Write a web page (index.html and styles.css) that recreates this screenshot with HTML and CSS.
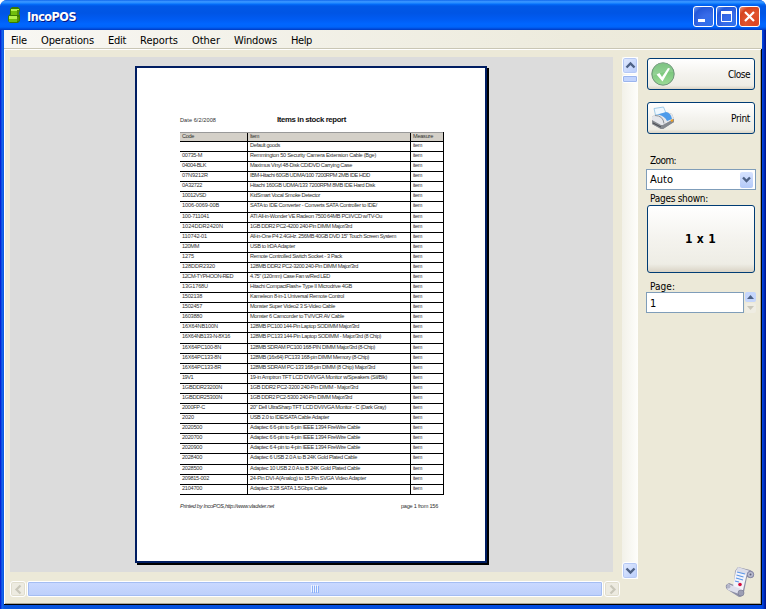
FILE: index.html
```html
<!DOCTYPE html>
<html lang="en">
<head>
<meta charset="utf-8">
<title>IncoPOS</title>
<link rel="stylesheet" href="styles.css">
</head>
<body>
<div class="window">
  <header class="titlebar">
    <svg class="app-icon" width="14" height="18" viewBox="0 0 14 18"><path d="M2 2l2-2h6l2 2v1l-1 4 1 1v6l-2 2H2l-2-2v-5l2-2z" fill="#397b00"/><path d="M3 2h8v2H3zM1 9h8v3H1z" fill="#b4f04c"/><path d="M3 4h6v4H3zM1 12h8v3H1z" fill="#70bd0c"/><path d="M9 3h2v5H9zM9 10h2v4H9z" fill="#548d05"/></svg>
    <h1><span data-w="49">IncoPOS</span></h1>
    <div class="controls">
      <button class="ctl"><svg width="19" height="19"><path d="M4 13.500h7" stroke="#fff" stroke-width="3"/></svg></button>
      <button class="ctl"><svg width="19" height="19"><path d="M4.500 5.500h10v9h-10z" fill="none" stroke="#fff"/><path d="M4 5.500h11" stroke="#fff" stroke-width="3"/></svg></button>
      <button class="ctl ctl-close"><svg width="19" height="19"><path d="M5 5l9 9M14 5l-9 9" stroke="#fff" stroke-width="2.200"/></svg></button>
    </div>
  </header>
  <nav class="menu">
    <span data-w="16">File</span><span data-w="53">Operations</span><span data-w="18">Edit</span><span data-w="38">Reports</span><span data-w="28">Other</span><span data-w="43">Windows</span><span data-w="21">Help</span>
  </nav>
  <main class="content">
    <section class="viewer">
      <div class="canvas">
        <article class="paper">
          <div class="report-head"><span class="date" data-w="36">Date 6/2/2008</span><h2><span data-w="69">Items in stock report</span></h2></div>
          <div class="report" id="report"></div>
          <div class="report-foot"><i data-w="94">Printed by IncoPOS,http://www.vladster.net</i><span data-w="37">page 1 from 156</span></div>
        </article>
      </div>
      <div class="vscroll">
        <div class="sb"><svg width="15" height="15"><path d="M3.500 9.500l4-4 4 4" fill="none" stroke="#4d6185" stroke-width="2.400"/></svg></div>
        <div class="vthumb"></div>
        <div class="sb sb-end"><svg width="15" height="15"><path d="M3.500 5.500l4 4 4-4" fill="none" stroke="#4d6185" stroke-width="2.400"/></svg></div>
      </div>
      <div class="hscroll">
        <div class="sb sb-off"><svg width="15" height="15"><path d="M9.500 3.500l-4 4 4 4" fill="none" stroke="#c9c7ba" stroke-width="2.200"/></svg></div>
        <div class="hthumb"><svg width="9" height="8"><path d="M.5 0v7M2.500 0v7M4.500 0v7M6.500 0v7" stroke="#eef4fe"/><path d="M1.500 1v7M3.500 1v7M5.500 1v7M7.500 1v7" stroke="#8cb0f8"/></svg></div>
        <div class="sb sb-off"><svg width="15" height="15"><path d="M5.500 3.500l4 4-4 4" fill="none" stroke="#c9c7ba" stroke-width="2.200"/></svg></div>
      </div>
    </section>
    <aside class="side">
      <button class="btn btn-ok">
        <svg width="24" height="24" viewBox="0 0 24 24"><defs><linearGradient id="g" x2="0" y2="1"><stop stop-color="#65b96c"/><stop offset="1" stop-color="#9bdb96"/></linearGradient></defs><circle cx="12" cy="12" r="11.200" fill="url(#g)" stroke="#70947b"/><path d="M2 11a10 10 0 0 1 20-1q-9-1-20 4z" fill="#fff" opacity=".15"/><path d="M5.500 12.500l3-1.500 2.500 4 6-9 2 .5-7.500 13z" fill="#fff"/></svg>
        <span data-w="22">Close</span>
      </button>
      <button class="btn btn-print">
        <svg width="24" height="24" viewBox="0 0 24 24"><path d="M1 11l4-3 10-2 6 2 2 5v3l-11 7h-2L1 18z" fill="#94989e"/><path d="M1 11l4-3 10-2 6 2 2 5-11 6h-3L1 15z" fill="#e4e6ea"/><path d="M1 14l9 5h2l11-6v3l-11 7h-2L1 18z" fill="#85898f"/><path d="M2 17l8 4" stroke="#45484d"/><path d="M4.500 9L3 2.500 12.500 1l2.500 6z" fill="#eef8ff" stroke="#8dc0e2" stroke-width=".8"/><path d="M7 8.500L15 6q5 1 6 7l-5 2q-2-5-9-6.500z" fill="#4c9bea"/><path d="M4 9.500q8 0 9 8" fill="none" stroke="#8c9299"/><path d="M20 15l2-1" stroke="#f0a020" stroke-width="2"/></svg>
        <span data-w="19">Print</span>
      </button>
      <label class="lb-zoom"><span data-w="26">Zoom:</span></label>
      <div class="select"><span data-w="23">Auto</span><i class="drop"><svg width="13" height="16"><path d="M3 5.500l3.500 3.500L10 5.500" fill="none" stroke="#4d6185" stroke-width="2.400"/></svg></i></div>
      <label class="lb-pages"><span data-w="58">Pages shown:</span></label>
      <button class="btn btn-grid"><span data-w="31">1 x 1</span></button>
      <label class="lb-page"><span data-w="25">Page:</span></label>
      <div class="spin"><div class="field">1</div><div class="arrows"><i><svg width="9" height="8"><path d="M1 6l3.500-4L8 6z" fill="#4d6185"/></svg></i><i class="off"><svg width="9" height="8"><path d="M1 2l3.500 4L8 2z" fill="#c9c7ba"/></svg></i></div></div>
      <svg class="scroll-icon" width="30" height="32" viewBox="0 0 30 32"><path d="M10 5l3-4 12 3q4 2 4 5t-4 3l-3-1-3 15q-1 5-5 5L3 24q-3-2-2-5l3-2 5 2z" fill="#8d8fa5"/><path d="M11 4l3-1 8 4-4 17-4 3-6-6z" fill="#f3f3fa"/><path d="M13 1l12 4q-3 1-3 4L11 5z" fill="#dcdde9"/><circle cx="25.500" cy="8.500" r="3.200" fill="#b9bbcf" stroke="#77799a" stroke-width=".8"/><circle cx="25.500" cy="8.500" r="1" fill="#5d5f78"/><path d="M3 18l13 5q-3 1-2 5L3 24q-2-3 0-6z" fill="#dedfeb"/><circle cx="3.500" cy="20.500" r="2" fill="#b3b5c8"/><circle cx="16" cy="27" r="3" fill="#9c9eb4" stroke="#7b7d94" stroke-width=".7"/><path d="M12 6l8 2M11.500 9l7 2M11 12l7 2M10 15l4 1" stroke="#5b96e6" stroke-width="1.100"/><circle cx="15" cy="18.500" r="1.800" fill="#d20f3c"/></svg>
    </aside>
  </main>
</div>
<script src="report.js"></script>
</body>
</html>
```
FILE: styles.css
```css
* { box-sizing: border-box; }
body { margin: 0; width: 766px; height: 609px; overflow: hidden; background: #fff; font: 11px "DejaVu Sans Condensed", "DejaVu Sans", sans-serif; font-stretch: condensed; color: #000; }
span, i { white-space: nowrap; }
button { padding: 0; font: inherit; color: inherit; }
svg { display: block; flex: none; }
.window { width: 766px; height: 609px; display: flex; flex-direction: column; padding: 0 4px 4px; background: linear-gradient(90deg, #0019cf 0, #0831d9 1px, #166aee 2px, #0855dd 4px, #0048e0 762px, #003dd8 763px, #001ea0 765px, #00138c 766px); border-radius: 7px 7px 0 0; overflow: hidden; }
.titlebar { flex: none; height: 30px; margin: 0 -4px; padding: 0 6px 0 8px; display: flex; align-items: center; background: linear-gradient(180deg, #0058e6 0, #3a93ff 1px, #288eff 3px, #036ffc 4px, #0058e6 6px, #0055e5 13px, #005bf2 19px, #0066ff 24px, #0064fa 27px, #0048d8 29px, #003bbd 30px); }
.app-icon { margin-top: 2px; }
h1 { margin: 4px 0 0 5px; font: bold 12.500px "DejaVu Sans Condensed", sans-serif; color: #fff; text-shadow: 1px 1px 0 #0a1883; line-height: 16px; flex: 1; }
.controls { display: flex; gap: 2px; margin-top: 3px; }
.ctl { width: 21px; height: 21px; border: 1px solid #fff; border-radius: 3px; background: radial-gradient(circle at 80% 85%, #2f71ed 0, #386be8 40%, #2458d8 75%, #6f99f2 100%); }
.ctl-close { background: radial-gradient(circle at 80% 85%, #dc4522 0, #e1542f 45%, #d5431e 75%, #ef9b80 100%); }
.menu { flex: none; height: 19px; padding-left: 7px; display: flex; gap: 14px; align-items: center; line-height: 19px; background: linear-gradient(90deg, #f8f7f3, #edebdd 75%, #ece9d8); border-bottom: 1px solid #c9c6b5; }
.menu span { margin-top: 2px; }
.content { flex: 1; display: flex; background: #ece9d8; border: solid #000; border-width: 0 1px 1px 0; box-shadow: inset 1px 1px #fff, inset -1px -1px #aca899; padding: 8px 6px 0 6px; }
.viewer { width: 628px; height: 540px; display: grid; grid-template: 522px 16px / 603px 16px; column-gap: 9px; row-gap: 2px; }
.canvas { height: 515px; background: #dcdcdc; padding: 9px 0 0 125px; }
.paper { width: 352px; height: 497px; border: 2px solid #001d62; background: #fff; box-shadow: 2px 2px #000; padding: 46px 42px 0 43px; font: 5.600px "Liberation Sans", Arial, sans-serif; color: #303030; }
.report-head { height: 18px; display: flex; line-height: 12px; }
.date { width: 97px; }
h2 { margin: 0; font: bold 7.800px/12px "Liberation Sans", Arial, sans-serif; color: #111; }
.report { width: 264px; border: solid #000; border-width: 0 1px 0 0; }
.row { height: 10.086px; display: grid; grid-template-columns: 67px 163px 33px; line-height: 7px; border-bottom: 1px solid #000; }
.row > div { padding: 0 0 0 2px; overflow: hidden; }
.row > div + div { border-left: 1px solid #000; }
.row.head { height: 10px; background: #d4d0c8; border-top: 1px solid #999; line-height: 6px; }
.report-foot { display: flex; justify-content: space-between; margin-top: 8px; padding-right: 5px; line-height: 7px; }
.vscroll { display: flex; flex-direction: column; background: linear-gradient(90deg, #f2f1e9, #fefefb); }
.sb { flex: none; width: 16px; height: 17px; border: 1px solid #fff; border-radius: 3px; background: linear-gradient(135deg, #e1eafe, #b9cdfb); box-shadow: inset 0 0 0 1px #b6c9f5; display: flex; align-items: center; justify-content: center; }
.sb-end { margin-top: auto; }
.vthumb { height: 8px; margin-top: 1px; border: 1px solid #fff; border-radius: 2px; background: #c2d4fd; box-shadow: inset 0 0 0 1px #9bb5ed; }
.hscroll { grid-column: 1 / -1; width: 610px; height: 16px; display: flex; gap: 1px; }
.hscroll .sb { height: 16px; }
.sb-off { background: #edebe1; box-shadow: inset 0 0 0 1px #e0ddcd; }
.hthumb { flex: 1; border: 1px solid #fff; border-radius: 2px; background: linear-gradient(#cad9ff, #bccffb); box-shadow: inset 0 0 0 1px #a4bdf2; display: flex; align-items: center; justify-content: center; }
.side { width: 110px; margin-left: 8px; display: flex; flex-direction: column; align-items: flex-start; font-size: 10px; }
.btn { flex: none; width: 108px; height: 32px; margin-left: 1px; border: 1px solid #003c74; border-radius: 3px; background: linear-gradient(#fff, #f4f3ee 50%, #eeede5 88%, #d9d3c5); display: flex; align-items: center; justify-content: space-between; padding: 0 4px 0 3px; }
.btn-ok { margin-top: 1px; }
.btn-print { margin-top: 12px; }
.btn-grid { height: 68px; justify-content: center; font-weight: bold; font-size: 12px; }
label { line-height: 14px; padding-left: 4px; }
.lb-zoom { margin-top: 20px; }
.select { width: 110px; height: 21px; margin-top: 1px; border: 1px solid #7f9db9; background: #fff; display: flex; align-items: center; justify-content: space-between; padding: 0 2px 0 3px; font-size: 11px; }
.drop { width: 13px; height: 16px; border-radius: 2px; background: linear-gradient(#d6e2fe, #b3c9f8); }
.lb-pages { margin-top: 2px; line-height: 13px; }
.lb-page { margin-top: 7px; }
.spin { width: 110px; height: 21px; display: flex; gap: 1px; margin-top: -2px; }
.field { width: 98px; border: 1px solid #7f9db9; background: #fff; padding-left: 3px; line-height: 21px; font-size: 11px; }
.arrows { width: 11px; display: flex; flex-direction: column; gap: 1px; }
.arrows i { height: 10px; padding: 1px; background: #c5d6fc; border-radius: 2px; }
.arrows .off { background: #efede3; }
.scroll-icon { margin: auto 0 6px 79px; }
```
FILE: report.js
```js
// code, code width, item, item width
const rows = [
  ["", 0, "Default goods", 30],
  ["00735-M", 20, "Remmington 50 Security Camera Extension Cable (Bge)", 126],
  ["04004-BLK", 24, "Maximus Vinyl 48-Disk CD/DVD Carrying Case", 102],
  ["07N9212R", 26, "IBM-Hitachi 60GB UDMA/100 7200RPM 2MB IDE HDD", 120],
  ["0A32722", 20, "Hitachi 160GB UDMA/133 7200RPM 8MB IDE Hard Disk", 125],
  ["10012VSD", 24, "KidSmart Vocal Smoke Detector", 70],
  ["1006-0069-00B", 37, "SATA to IDE Converter - Converts SATA Controller to IDE/", 127],
  ["100-711041", 27, "ATI All-in-Wonder VE Radeon 7500 64MB PCI/VCD w/TV-Ou", 132],
  ["1024DDR2420N", 41, "1GB DDR2 PC2-4200 240-Pin DIMM Major/3rd", 102],
  ["110742-01", 25, "All-in-One P4 2.4GHz. 256MB 40GB DVD 15\" Touch Screen System", 146],
  ["120MM", 17, "USB to IrDA Adapter", 45],
  ["1275", 12, "Remote Controlled Switch Socket - 3 Pack", 92],
  ["128DDR2320", 33, "128MB DDR2 PC2-3200 240-Pin DIMM Major/3rd", 108],
  ["12CM-TYPHOON-RED", 51, "4.75\" (120mm) Case Fan w/Red LED", 80],
  ["13G1768U", 26, "Hitachi CompactFlash+ Type II Microdrive 4GB", 102],
  ["1502138", 20, "Kameleon 8-in-1 Universal Remote Control", 94],
  ["1502457", 20, "Monster Super Video2 3 S-Video Cable", 85],
  ["1603880", 20, "Monster 6 Camcorder to TV/VCR AV Cable", 94],
  ["16X64NB100N", 36, "128MB PC100 144-Pin Laptop SODIMM Major/3rd", 109],
  ["16X64NB133-N-8X16", 48, "128MB PC133 144-Pin Laptop SODIMM - Major/3rd (8 Chip)", 131],
  ["16X64PC100-8N", 39, "128MB SDRAM PC100 168-PIN DIMM Major/3rd (8-Chip)", 125],
  ["16X64PC133-8N", 39, "128MB (16x64) PC133 168-pin DIMM Memory (8-Chip)", 119],
  ["16X64PC133-8R", 39, "128MB SDRAM PC-133 168-pin DIMM (8 Chip) Major/3rd", 125],
  ["19V1", 11, "19-in Amptron TFT LCD DVI/VGA Monitor w/Speakers (Sil/Blk)", 137],
  ["1GBDDR23200N", 40, "1GB DDR2 PC2-3200 240-Pin DIMM - Major/3rd", 108],
  ["1GBDDR25300N", 40, "1GB DDR2 PC2-5300 240-Pin DIMM Major/3rd", 102],
  ["2000FP-C", 23, "20\" Dell UltraSharp TFT LCD DVI/VGA Monitor - C (Dark Gray)", 136],
  ["2020", 12, "USB 2.0 to IDE/SATA Cable Adapter", 79],
  ["2020500", 20, "Adaptec 6 6-pin to 6-pin IEEE 1394 FireWire Cable", 110],
  ["2020700", 20, "Adaptec 6 6-pin to 4-pin IEEE 1394 FireWire Cable", 110],
  ["2020900", 20, "Adaptec 6 4-pin to 4-pin IEEE 1394 FireWire Cable", 110],
  ["2028400", 20, "Adaptec 6 USB 2.0 A to B 24K Gold Plated Cable", 107],
  ["2028500", 20, "Adaptec 10 USB 2.0 A to B 24K Gold Plated Cable", 110],
  ["209815-002", 27, "24-Pin DVI-A(Analog) to 15-Pin SVGA Video Adapter", 116],
  ["2104700", 20, "Adaptec 3.28 SATA 1.5Gbps Cable", 77]
];

function cell(text, width) {
  const div = document.createElement("div");
  const span = document.createElement("span");
  span.textContent = text;
  span.dataset.w = width;
  div.append(span);
  return div;
}

function addRow(code, codeW, item, itemW, measure, measureW, head) {
  const row = document.createElement("div");
  row.className = head ? "row head" : "row";
  row.append(cell(code, codeW), cell(item, itemW), cell(measure, measureW));
  document.getElementById("report").append(row);
}

addRow("Code", 12, "Item", 9, "Measure", 20, true);
rows.forEach(r => addRow(...r, "item", 9));

// Track each label so that it fills its measured width.
document.querySelectorAll("[data-w]").forEach(el => {
  const n = el.textContent.length;
  if (!n) return;
  const natural = document.createRange();
  natural.selectNodeContents(el);
  el.style.letterSpacing = (el.dataset.w - natural.getBoundingClientRect().width) / n + "px";
});
```
